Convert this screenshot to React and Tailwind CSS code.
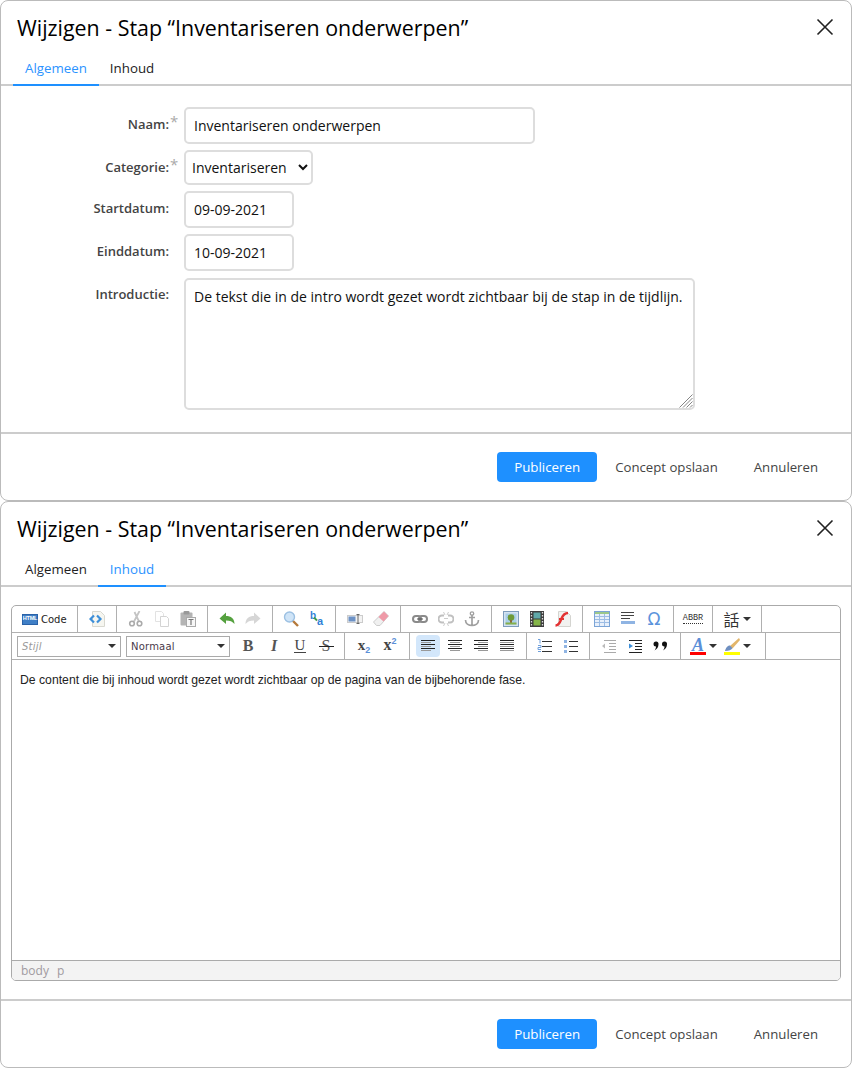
import React from "react";

const S = ({ children, w = 16, h = 16 }) => (
  <svg width={w} height={h} viewBox={`0 0 ${w} ${h}`} className="block">{children}</svg>
);
const Lines = ({ rows, color = "#222" }) => (
  <S>
    {rows.map(([a, b], i) => (
      <rect key={i} x={a} y={2 + i * 2} width={b - a} height="1" fill={i % 2 ? "#999" : color} />
    ))}
  </S>
);

const icons = {
  source: (
    <S>
      <path d="M3.500 0.500h8l4 4v11h-12z" fill="#f6f6f0" stroke="#d8d8d0" />
      <path d="M5 4.500L1.500 8 5 11.500" fill="none" stroke="#3d8fd9" strokeWidth="2.200" />
      <path d="M8 4.500L11.500 8 8 11.500" fill="none" stroke="#3d8fd9" strokeWidth="2.200" />
    </S>
  ),
  cut: (
    <S>
      <path d="M11.500 0L6 10.500M6.500 1l4.500 9.500" stroke="#c4c4c4" strokeWidth="1.800" fill="none" />
      <circle cx="4" cy="12.500" r="2.300" fill="none" stroke="#aaa" strokeWidth="1.600" />
      <circle cx="11.500" cy="12.500" r="2.300" fill="none" stroke="#aaa" strokeWidth="1.600" />
    </S>
  ),
  copy: (
    <S>
      <path d="M1.500 0.500h6l2 2v8h-8z" fill="#fff" stroke="#e2e2e2" />
      <path d="M6.500 5.500h6l2 2v8h-8z" fill="#fff" stroke="#d4d4d4" />
    </S>
  ),
  paste: (
    <S>
      <rect x="0.500" y="1.500" width="12" height="13" rx="1" fill="#b4b4b4" />
      <rect x="3.500" y="0" width="6" height="3.500" rx="1" fill="#999" />
      <rect x="6.500" y="6.500" width="9" height="9" fill="#f7f7f7" stroke="#aaa" />
      <path d="M8.500 8.500h5M11 8.500v5.500" stroke="#777" strokeWidth="1.200" />
    </S>
  ),
  undo: (
    <S>
      <path d="M0.500 7.500L7 1.500v3.500c5 0 8.500 2.500 8.500 8-2-2.500-4.500-3.500-8.500-3.500v3.500z" fill="#55a13f" />
    </S>
  ),
  redo: (
    <S>
      <path d="M15.500 7.500L9 1.500v3.500c-5 0-8.500 2.500-8.500 8 2-2.500 4.500-3.500 8.500-3.500v3.500z" fill="#d6d6d6" />
    </S>
  ),
  find: (
    <S>
      <path d="M9.500 9.500l5.500 5.500" stroke="#b5793a" strokeWidth="2.400" />
      <circle cx="6.500" cy="6" r="5" fill="#cfe4f7" stroke="#9cc0e2" strokeWidth="1.400" />
    </S>
  ),
  replace: (
    <span className="relative block w-[16px] h-[16px] font-['Liberation_Sans'] font-bold text-[#2f7fd6]">
      <span className="absolute left-[1px] top-[-1px] text-[10px] leading-[11px]">b</span>
      <span className="absolute left-[8px] top-[5px] text-[11px] leading-[11px]">a</span>
      <svg width="16" height="16" viewBox="0 0 16 16" className="absolute left-0 top-0">
        <path d="M5 6.500l3 3" stroke="#3e9a4a" strokeWidth="1.800" />
      </svg>
    </span>
  ),
  field: (
    <S>
      <rect x="0.500" y="4.500" width="15" height="7" fill="#f3f3f3" stroke="#ccc" />
      <rect x="1.500" y="5.500" width="7" height="5" fill="#6d92c6" />
      <path d="M9.500 3.500h3M11 3.500v9M9.500 12.500h3" stroke="#666" />
    </S>
  ),
  eraser: (
    <S>
      <path d="M11 0.500l4.500 4.500-8.500 9.500H3.500L0.500 11z" fill="#f0f0f0" stroke="#ccc" />
      <path d="M11 0.500l4.500 4.500-5 5.500L5.500 6z" fill="#ef9aa8" />
    </S>
  ),
  link: (
    <S>
      <rect x="1" y="5" width="8" height="6" rx="3" fill="none" stroke="#8a8a8a" strokeWidth="2" />
      <rect x="7" y="5" width="8" height="6" rx="3" fill="none" stroke="#8a8a8a" strokeWidth="2" />
      <path d="M5 8h6" stroke="#555" strokeWidth="1.200" />
    </S>
  ),
  unlink: (
    <S>
      <path d="M6 4.500H4a3.500 3.500 0 0 0 0 7h2M10 4.500h2a3.500 3.500 0 0 1 0 7h-2" fill="none" stroke="#c0c0c0" strokeWidth="2" />
      <path d="M6 7.500h4M5.500 1l1.500 3M10.500 1L9 4M5.500 15l1.500-3M10.500 15L9 12" stroke="#ccc" />
    </S>
  ),
  anchor: (
    <S>
      <circle cx="8" cy="2.500" r="1.700" fill="none" stroke="#a0a0a0" strokeWidth="1.300" />
      <path d="M8 4v10.500M5 6.500h6M1.500 9c0 3.500 3 5.500 6.500 5.500s6.500-2 6.500-5.500" fill="none" stroke="#a0a0a0" strokeWidth="1.700" />
    </S>
  ),
  image: (
    <S>
      <rect x="0.500" y="0.500" width="15" height="15" fill="#d5e3f2" stroke="#7d9cbc" />
      <rect x="2.500" y="2.500" width="11" height="11" fill="#a9cfe8" />
      <circle cx="8" cy="6.500" r="3.300" fill="#6e9a38" />
      <rect x="7" y="9" width="2" height="3" fill="#8a6a3c" />
      <rect x="2.500" y="11.500" width="11" height="2" fill="#86b04a" />
    </S>
  ),
  film: (
    <S>
      <rect x="1" y="0" width="14" height="16" fill="#3d3d3d" />
      <rect x="4.500" y="1.500" width="7" height="6" fill="#5fa8a8" />
      <rect x="4.500" y="8.500" width="7" height="6" fill="#84b548" />
      <path d="M2.500 1v14M13.500 1v14" stroke="#ddd" strokeWidth="1.300" strokeDasharray="1.500 1.500" />
    </S>
  ),
  flash: (
    <S>
      <path d="M3.500 0.500h8l4 4v11h-12z" fill="#f2f2f0" stroke="#d4d4d0" />
      <path d="M0.500 14.500c4 0 4.500-3.500 6-7S10 2 13 2" fill="none" stroke="#e33232" strokeWidth="2.400" />
      <path d="M4 8h5" stroke="#e33232" strokeWidth="2" />
    </S>
  ),
  table: (
    <S>
      <rect x="0.500" y="0.500" width="15" height="15" fill="#e8f0fb" stroke="#7ba4d6" />
      <rect x="1" y="1" width="14" height="2" fill="#9cc88a" />
      <path d="M1 5.500h14M1 8.500h14M1 11.500h14M5.500 3v12M10.500 3v12" stroke="#9dbde4" />
    </S>
  ),
  hr: (
    <S>
      <path d="M1 1.500h13M1 4.500h13M1 7.500h9" stroke="#444" />
      <rect x="1" y="10" width="14" height="3" fill="#8fb4e3" />
    </S>
  ),
  omega: <span className="font-['DejaVu_Sans'] text-[17px] leading-4 text-[#5b93dc]">Ω</span>,
  abbr: (
    <span className="font-['Liberation_Mono'] text-[8.500px] leading-[9px] text-[#333] border-b border-dotted border-[#333]">ABBR</span>
  ),
  b: <span className="font-['Liberation_Serif'] text-[16px] leading-4 font-bold text-[#555]">B</span>,
  i: <span className="font-['Liberation_Serif'] text-[16px] leading-4 font-bold italic text-[#555]">I</span>,
  u: <span className="font-['Liberation_Serif'] text-[15px] leading-[13px] border-b border-[#444] px-[1px] text-[#444]">U</span>,
  s: (
    <span className="relative font-['Liberation_Serif'] text-[16px] leading-4 text-[#555] px-[2px]">
      S
      <span className="absolute left-[-1px] right-[-2px] top-[8px] h-px bg-[#222]" />
    </span>
  ),
  sub: (
    <span className="font-['Liberation_Serif'] text-[15px] leading-4 font-bold text-[#444]">
      x<span className="text-[9px] font-['Liberation_Sans'] text-[#5b8fd8] relative top-[3px]">2</span>
    </span>
  ),
  sup: (
    <span className="font-['Liberation_Serif'] text-[16px] leading-4 font-bold text-[#444]">
      x<span className="text-[9px] font-['Liberation_Sans'] text-[#5b8fd8] relative top-[-6px]">2</span>
    </span>
  ),
  left: <Lines rows={[[1, 15], [1, 11], [1, 15], [1, 11], [1, 15], [1, 11]]} />,
  center: <Lines rows={[[1, 15], [3, 13], [1, 15], [3, 13], [1, 15], [3, 13]]} />,
  right: <Lines rows={[[1, 15], [5, 15], [1, 15], [5, 15], [1, 15], [5, 15]]} />,
  justify: <Lines rows={[[1, 15], [1, 15], [1, 15], [1, 15], [1, 15], [1, 15]]} />,
  ol: (
    <S>
      <path d="M1 1.500h2v4M1 7.500h3v2H1v2h3M1 13.500h3" stroke="#6e9fdc" fill="none" />
      <path d="M5 3.500h10M5 8.500h10M5 13.500h10" stroke="#333" />
    </S>
  ),
  ul: (
    <S>
      <rect x="1" y="2" width="3" height="3" fill="#8fb4e3" />
      <rect x="1" y="7" width="3" height="3" fill="#8fb4e3" />
      <rect x="1" y="12" width="3" height="3" fill="#8fb4e3" />
      <path d="M6 3.500h9M6 8.500h9M6 13.500h9" stroke="#333" />
    </S>
  ),
  outdent: (
    <S>
      <path d="M3 2.500h12M8 5.500h7M8 8.500h7M8 11.500h7M3 14.500h12" stroke="#aaa" />
      <path d="M1 8l3-2.500v5z" fill="#bbb" />
    </S>
  ),
  indent: (
    <S>
      <path d="M2 2.500h13M8 5.500h7M8 8.500h7M8 11.500h7M2 14.500h13" stroke="#222" />
      <path d="M6 8L2 5.500v5z" fill="#3d8fd9" />
    </S>
  ),
  quote: (
    <S>
      <path d="M3 3.500a2.300 2.300 0 0 1 2.500 2.700C5.500 9 4 11 1.500 12.500 2.500 11 3 10 3 8.500a2.500 2.500 0 0 1 0-5z" fill="#111" />
      <path d="M11.500 3.500A2.300 2.300 0 0 1 14 6.200c0 2.800-1.500 4.800-4 6.300 1-1.500 1.500-2.500 1.500-4a2.500 2.500 0 0 1 0-5z" fill="#111" />
    </S>
  ),
};

const Btn = ({ n, w = "w-[26px]", active }) => (
  <span className={`flex items-center justify-center h-[22px] ${w} ${active ? "bg-[#d3e7fb] rounded-[4px]" : ""}`}>
    {icons[n]}
  </span>
);

const Caret = () => <span className="block ml-[3px] border-x-[4px] border-t-[4px] border-x-transparent border-t-[#333]" />;

const Group = ({ children, className = "" }) => (
  <div className={`flex items-center h-full border-r border-[#b0b0b0] ${className}`}>{children}</div>
);

const Combo = ({ label, italic }) => (
  <div className={`flex items-center justify-between h-[21px] w-[104px] border border-[#aaa] pl-[4px] pr-[4px] font-['DejaVu_Sans'] text-[10px] tracking-[0.2px] ${italic ? "italic text-[#999]" : "text-[#4a3a4a]"}`}>
    <span>{label}</span>
    <span className="block border-x-[4px] border-t-[4px] border-x-transparent border-t-[#333]" />
  </div>
);

const Editor = () => (
  <div className="mx-[10px] my-[18px] h-[376px] flex flex-col border border-[#aaa] rounded-[5px] overflow-hidden bg-white">
    <div className="flex h-[27px] shrink-0 border-b border-[#b0b0b0]">
      <Group className="w-[66px] pl-[10px]">
        <span className="flex items-center justify-center w-[16px] h-[11px] bg-[#3f7fc6] border border-[#2a62a8] font-['Liberation_Sans'] text-[5.500px] font-bold leading-none text-white tracking-[-0.2px]">HTML</span>
        <span className="ml-[3px] font-['DejaVu_Sans'] text-[10px] text-[#222]">Code</span>
      </Group>
      <Group className="w-[39px] justify-center"><Btn n="source" /></Group>
      <Group className="w-[91px] justify-center"><Btn n="cut" /><Btn n="copy" /><Btn n="paste" /></Group>
      <Group className="w-[65px] justify-center"><Btn n="undo" /><Btn n="redo" /></Group>
      <Group className="w-[63px] justify-center"><Btn n="find" /><Btn n="replace" /></Group>
      <Group className="w-[65px] justify-center"><Btn n="field" /><Btn n="eraser" /></Group>
      <Group className="w-[91px] justify-center"><Btn n="link" /><Btn n="unlink" /><Btn n="anchor" /></Group>
      <Group className="w-[91px] justify-center"><Btn n="image" /><Btn n="film" /><Btn n="flash" /></Group>
      <Group className="w-[91px] justify-center"><Btn n="table" /><Btn n="hr" /><Btn n="omega" /></Group>
      <Group className="w-[39px] justify-center"><Btn n="abbr" /></Group>
      <Group className="w-[49px] justify-center">
        <span className="font-['Noto_Sans_CJK_SC',sans-serif] text-[16px] leading-4 text-[#333]">話</span>
        <Caret />
      </Group>
    </div>
    <div className="flex h-[27px] shrink-0 border-b border-[#b0b0b0]">
      <div className="flex items-center gap-[5px] pl-[5px]">
        <Combo label="Stijl" italic />
        <Combo label="Normaal" />
      </div>
      <Group className="w-[115px] pl-[5px]"><Btn n="b" /><Btn n="i" /><Btn n="u" /><Btn n="s" /></Group>
      <Group className="w-[65px] justify-center"><Btn n="sub" /><Btn n="sup" /></Group>
      <Group className="w-[117px] pl-[6px]">
        <Btn n="left" w="w-[24px] mr-[2px]" active /><Btn n="center" /><Btn n="right" /><Btn n="justify" />
      </Group>
      <Group className="w-[63px] justify-center"><Btn n="ol" /><Btn n="ul" /></Group>
      <Group className="w-[91px] justify-center"><Btn n="outdent" /><Btn n="indent" /><Btn n="quote" /></Group>
      <Group className="w-[85px] pl-[9px]">
        <span className="flex flex-col items-center w-[16px]">
          <span className="font-['Liberation_Serif'] text-[18px] leading-[14px] font-bold italic text-[#5b8fd8]">A</span>
          <span className="block w-[16px] h-[3px] bg-[#f00]" />
        </span>
        <Caret />
        <span className="flex flex-col items-center w-[16px] ml-[7px]">
          <svg width="16" height="14" viewBox="0 0 16 14" className="block">
            <path d="M15 0L6 8l2.500 2.500L16 2z" fill="#e2b56a" />
            <path d="M1 13c1-4 3-5.500 5-5.500l2.500 2.500c-1 2-3.500 3-7.500 3z" fill="#6e8fc0" />
          </svg>
          <span className="block w-[16px] h-[3px] bg-[#ff0]" />
        </span>
        <Caret />
      </Group>
    </div>
    <div className="flex-1 px-[8px] pt-[12px] font-['Liberation_Sans'] text-[12.220px] leading-[16px] text-[#222]">
      De content die bij inhoud wordt gezet wordt zichtbaar op de pagina van de bijbehorende fase.
    </div>
    <div className="h-[20px] shrink-0 flex items-center gap-[8px] border-t border-[#aaa] bg-[#f3f3f3] pl-[9px] font-['Open_Sans'] text-[12px] text-[#a09aa0]">
      <span>body</span>
      <span>p</span>
    </div>
  </div>
);

const Row = ({ label, req, children, className = "", top = "pt-[8px]" }) => (
  <div className={`flex items-start ${className}`}>
    <div className={`w-[168px] shrink-0 text-right text-[13px] leading-[18px] font-semibold text-[#444] ${top}`}>{label}</div>
    <div className="w-[15px] shrink-0 pt-[6px] pl-[1px] text-[15px] leading-[16px] text-[#aaa]">{req ? "*" : ""}</div>
    {children}
  </div>
);

const inputCls =
  "h-[37px] border-2 border-[#ddd] rounded-[5px] px-[8px] text-[14px] text-[#111] bg-white outline-none";

const Dialog = ({ active, height, children }) => (
  <div className={`${height} flex flex-col border border-[#bbb] rounded-[8px] bg-white overflow-hidden`}>
    <div className="flex items-center justify-between h-[53px] pl-[16px] pr-[17px] pb-[1px] shrink-0">
      <h1 className="text-[21.400px] font-medium leading-[27px] text-black whitespace-nowrap">
        Wijzigen - Stap “Inventariseren onderwerpen”
      </h1>
      <svg width="18" height="18" viewBox="0 0 18 18" className="block">
        <path d="M1.500 1.500l15 15M16.500 1.500l-15 15" stroke="#222" strokeWidth="1.600" />
      </svg>
    </div>
    <div className="flex h-[32px] shrink-0 border-b-2 border-[#ccc] pl-[12px] text-[13.300px]">
      {["Algemeen", "Inhoud"].map((t, i) => (
        <div
          key={t}
          className={`h-[32px] w-fit px-[12px] pt-[5px] leading-[18px] border-b-2 ${i === 1 ? "-ml-px" : ""} ${
            active === i ? "text-[#2b93ff] border-[#1e90ff]" : "text-[#222] border-transparent"
          }`}
        >
          {t}
        </div>
      ))}
    </div>
    <div className="flex-1 min-h-0">{children}</div>
    <div className="h-[68px] shrink-0 border-t-2 border-[#ccc] flex items-center justify-end pr-[33px] text-[13.200px] text-[#444]">
      <button className="w-[100px] h-[30px] pt-[2px] rounded-[4px] bg-[#1e90ff] text-white text-[13.300px] mr-[18px]">Publiceren</button>
      <span className="mr-[36px] pt-[2px]">Concept opslaan</span>
      <span className="pt-[2px]">Annuleren</span>
    </div>
  </div>
);

export default function App() {
  return (
    <div className="w-[852px] h-[1068px] bg-white font-['Open_Sans',sans-serif]">
      <Dialog active={0} height="h-[501px]">
        <div className="pt-[21px]">
          <Row label="Naam:" req className="mb-[6px]">
            <input readOnly value="Inventariseren onderwerpen" className={`${inputCls} w-[351px]`} />
          </Row>
          <Row label="Categorie:" req className="mb-[6px]">
            <select className="h-[35px] w-[129px] border-2 border-[#ddd] rounded-[5px] pl-[2px] text-[14px] text-[#111] bg-white outline-none">
              <option>Inventariseren</option>
            </select>
          </Row>
          <Row label="Startdatum:" className="mb-[6px]">
            <input readOnly value="09-09-2021" className={`${inputCls} w-[110px]`} />
          </Row>
          <Row label="Einddatum:" className="mb-[7px]">
            <input readOnly value="10-09-2021" className={`${inputCls} w-[110px]`} />
          </Row>
          <Row label="Introductie:" top="pt-[7px]">
            <div className="relative">
              <textarea
                readOnly
                defaultValue="De tekst die in de intro wordt gezet wordt zichtbaar bij de stap in de tijdlijn."
                className="block w-[511px] h-[132px] border-2 border-[#ddd] rounded-[5px] px-[8px] py-[7px] text-[14px] leading-[19px] text-[#111] bg-white outline-none resize-none"
              />
              <svg width="14" height="14" viewBox="0 0 14 14" className="absolute right-[2px] bottom-[2px]">
                <path d="M0.500 13.500l13-13M4 13.500l9.500-9.500M7.500 13.500l6-6M11 13.500l2.500-2.500" stroke="#858585" strokeWidth="1" fill="none" />
              </svg>
            </div>
          </Row>
        </div>
      </Dialog>
      <Dialog active={1} height="h-[567px]">
        <Editor />
      </Dialog>
    </div>
  );
}
